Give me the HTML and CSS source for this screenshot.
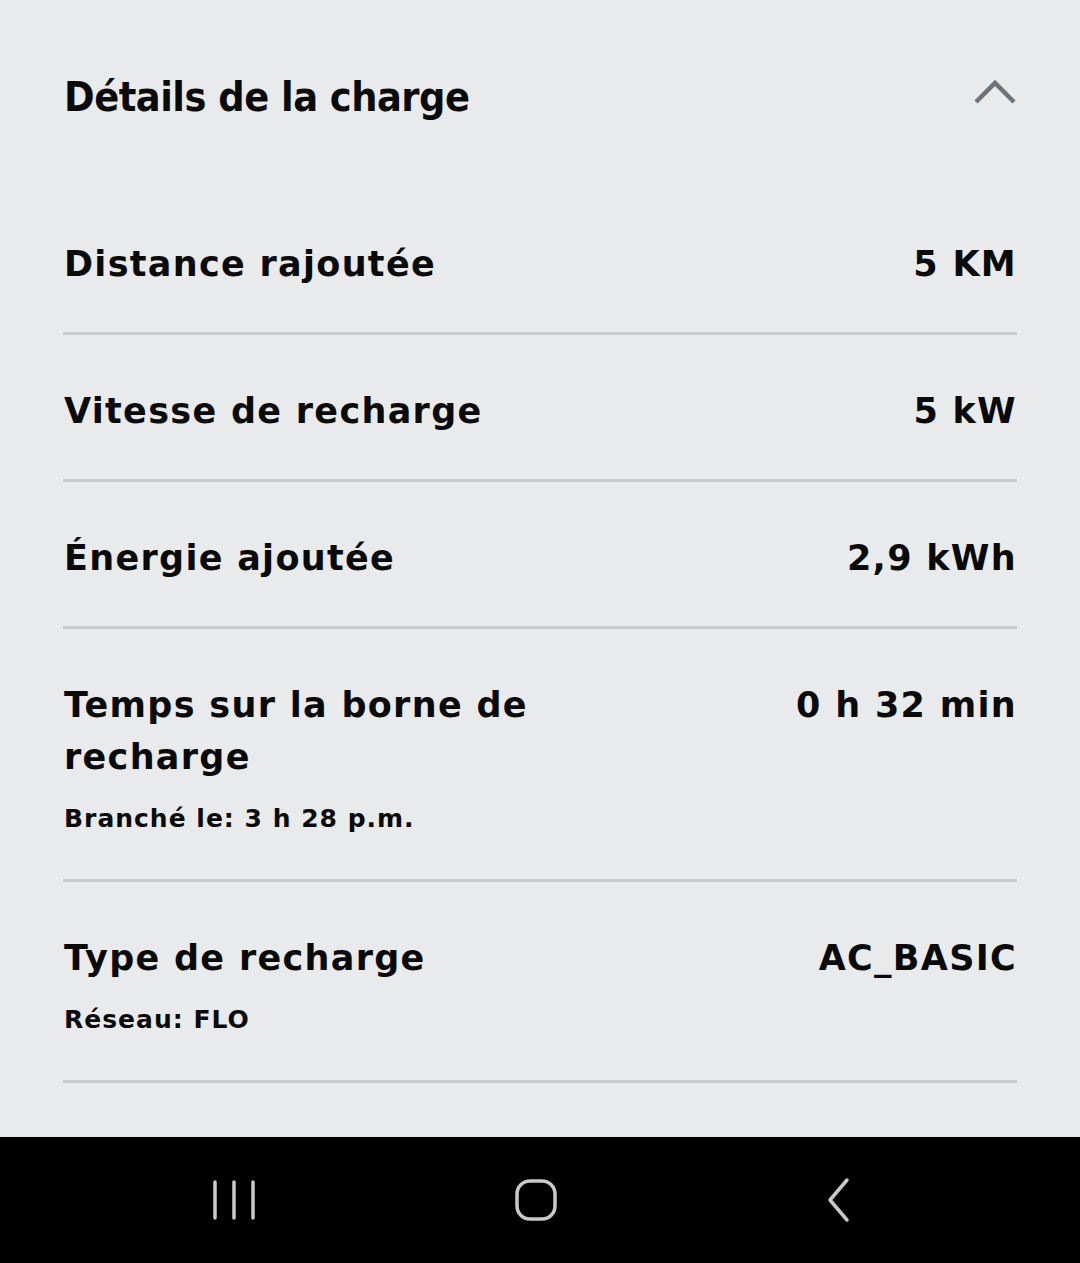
FILE: index.html
```html
<!DOCTYPE html>
<html lang="fr">

<head>
    <meta charset="UTF-8">
    <meta name="viewport" content="width=device-width, initial-scale=1.0">
    <title>Détails de la charge</title>
    <link rel="stylesheet" href="styles.css">
</head>

<body>
    <div class="screen">
        <main class="details">
            <header class="details-header">
                <h1>Détails de la charge</h1>
                <svg class="chevron" width="44" height="28" viewBox="0 0 44 28">
                    <path d="M3 24 L22 5 L41 24" fill="none" stroke="#6b737c" stroke-width="4.5" />
                </svg>
            </header>

            <div class="row">
                <div class="label">Distance rajoutée</div>
                <div class="value">5 KM</div>
            </div>
            <div class="row">
                <div class="label">Vitesse de recharge</div>
                <div class="value">5 kW</div>
            </div>
            <div class="row">
                <div class="label">Énergie ajoutée</div>
                <div class="value">2,9 kWh</div>
            </div>
            <div class="row">
                <div class="label">
                    Temps sur la borne de recharge
                    <div class="sub">Branché le: 3 h 28 p.m.</div>
                </div>
                <div class="value">0 h 32 min</div>
            </div>
            <div class="row">
                <div class="label">
                    Type de recharge
                    <div class="sub">Réseau: FLO</div>
                </div>
                <div class="value">AC_BASIC</div>
            </div>
        </main>

        <nav class="navbar">
            <svg width="44" height="42" viewBox="0 0 44 42">
                <path d="M3 3 V39 M22 3 V39 M41 3 V39" stroke="#c9c9c9" stroke-width="3.5" stroke-linecap="round" />
            </svg>
            <svg width="44" height="44" viewBox="0 0 44 44">
                <rect x="3" y="3" width="38" height="38" rx="13" fill="none" stroke="#c9c9c9" stroke-width="3.5" />
            </svg>
            <svg width="30" height="46" viewBox="0 0 30 46">
                <path d="M23 3 L6 23 L23 43" fill="none" stroke="#c9c9c9" stroke-width="3.5" stroke-linecap="round" stroke-linejoin="round" />
            </svg>
        </nav>
    </div>
</body>
</html>
```

FILE: styles.css
```css
body {
    margin: 0;
    background-color: #e9eaec;
    color: #0a0a0a;
    font-family: "DejaVu Sans", "Open Sans", sans-serif;
}

.screen {
    display: flex;
    flex-direction: column;
    height: 1263px;
}

.details {
    flex: 1;
    padding: 0 63px;
}

.details-header {
    display: flex;
    justify-content: space-between;
    align-items: center;
    height: 188px;
    padding-top: 6px;
    box-sizing: border-box;
}

.details-header h1 {
    margin: 0 0 0 1px;
    font-family: "DejaVu Sans Condensed", "DejaVu Sans", sans-serif;
    font-weight: bold;
    font-size: 41px;
    line-height: 60px;
    letter-spacing: -0.5px;
}

.chevron {
    margin-top: -10px;
}

.row {
    display: flex;
    justify-content: space-between;
    align-items: flex-start;
    padding: 50px 0 42px 1px;
    border-bottom: 3px solid #c9cacd;
    font-size: 35px;
    font-weight: bold;
    line-height: 52px;
    letter-spacing: 1.3px;
}

.label {
    max-width: 480px;
}

.value {
    text-align: right;
    white-space: nowrap;
}

.sub {
    margin-top: 18px;
    font-size: 25px;
    line-height: 36px;
    letter-spacing: 1px;
}

.navbar {
    display: grid;
    grid-template-columns: repeat(3, 1fr);
    justify-items: center;
    align-items: center;
    height: 126px;
    padding: 0 90px 0 83px;
    background-color: #000;
}
```
